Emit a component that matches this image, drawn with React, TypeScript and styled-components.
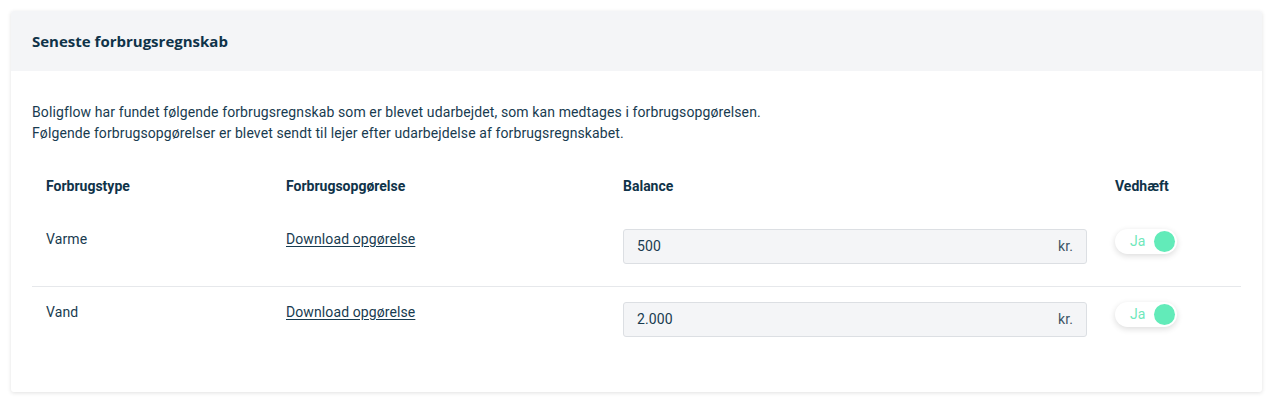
import React from "react";
import styled, { createGlobalStyle } from "styled-components";

const Global = createGlobalStyle`
  html, body { margin: 0; padding: 0; background: #ffffff; }
  body { font-family: Roboto, "Liberation Sans", sans-serif; color: #183b50; }
`;

const Page = styled.div`
  padding: 11px 10px 9px 11px;
`;

const Card = styled.section`
  background: #ffffff;
  border-radius: 3px;
  box-shadow: 0 1px 4px rgba(0, 0, 0, 0.12);
  overflow: hidden;
`;

const Header = styled.header`
  height: 60px;
  display: flex;
  align-items: center;
  padding: 0 21px;
  background: #f4f5f7;
`;

const Title = styled.h2`
  margin: 0;
  font-family: "Open Sans", sans-serif;
  font-weight: 700;
  font-size: 15px;
  color: #0f3349;
`;

const Body = styled.div`
  padding: 31px 21px 33px;
`;

const Intro = styled.p`
  margin: 0 0 32px;
  font-size: 14px;
  line-height: 21px;
  letter-spacing: 0.11px;
  color: #183b50;
`;

const Table = styled.div`
  display: grid;
  grid-template-columns: 240px 337px 492px 1fr;
`;

const Row = styled.div<{ $divider?: boolean; $head?: boolean }>`
  display: contents;
  & > * {
    padding-top: ${(p) => (p.$divider ? "15px" : "0")};
    padding-bottom: ${(p) => (p.$head ? "32px" : "22px")};
    border-top: ${(p) => (p.$divider ? "1px solid #e6e8eb" : "none")};
  }
`;

const Cell = styled.div`
  padding-left: 14px;
  padding-right: 14px;
  font-size: 14px;
  line-height: 21px;
  letter-spacing: 0.1px;
  color: #183b50;
`;

const HeadCell = styled(Cell)`
  font-weight: 700;
  font-size: 14px;
  letter-spacing: 0;
  color: #0f3349;
`;

const Link = styled.a`
  color: #183b50;
  text-decoration: underline;
  text-underline-offset: 2px;
  cursor: pointer;
`;

const Field = styled.div`
  height: 35px;
  box-sizing: border-box;
  display: flex;
  align-items: center;
  justify-content: space-between;
  padding: 0 13px;
  background: #f4f5f7;
  border: 1px solid #dcdfe3;
  border-radius: 3px;
  font-size: 14px;
  color: #183b50;
`;

const Unit = styled.span`
  color: #3d5566;
`;

const Toggle = styled.div`
  width: 62px;
  height: 25px;
  box-sizing: border-box;
  display: flex;
  align-items: center;
  justify-content: space-between;
  padding: 0 2px 0 15px;
  border-radius: 13px;
  background: #ffffff;
  box-shadow: 0 2px 6px rgba(0, 0, 0, 0.14);
  font-size: 14px;
  color: #6fe8bb;
`;

const Knob = styled.span`
  width: 21px;
  height: 21px;
  border-radius: 50%;
  background: #62ebb9;
`;

const rows = [
  { type: "Varme", amount: "500" },
  { type: "Vand", amount: "2.000" },
];

export default function App() {
  return (
    <>
      <Global />
      <Page>
        <Card>
          <Header>
            <Title>Seneste forbrugsregnskab</Title>
          </Header>
          <Body>
            <Intro>
              Boligflow har fundet følgende forbrugsregnskab som er blevet udarbejdet, som kan medtages i forbrugsopgørelsen.
              <br />
              Følgende forbrugsopgørelser er blevet sendt til lejer efter udarbejdelse af forbrugsregnskabet.
            </Intro>
            <Table>
              <Row $head>
                <HeadCell>Forbrugstype</HeadCell>
                <HeadCell>Forbrugsopgørelse</HeadCell>
                <HeadCell>Balance</HeadCell>
                <HeadCell>Vedhæft</HeadCell>
              </Row>
              {rows.map((r, i) => (
                <Row key={r.type} $divider={i > 0}>
                  <Cell>{r.type}</Cell>
                  <Cell>
                    <Link>Download opgørelse</Link>
                  </Cell>
                  <Cell>
                    <Field>
                      <span>{r.amount}</span>
                      <Unit>kr.</Unit>
                    </Field>
                  </Cell>
                  <Cell>
                    <Toggle>
                      <span>Ja</span>
                      <Knob />
                    </Toggle>
                  </Cell>
                </Row>
              ))}
            </Table>
          </Body>
        </Card>
      </Page>
    </>
  );
}
